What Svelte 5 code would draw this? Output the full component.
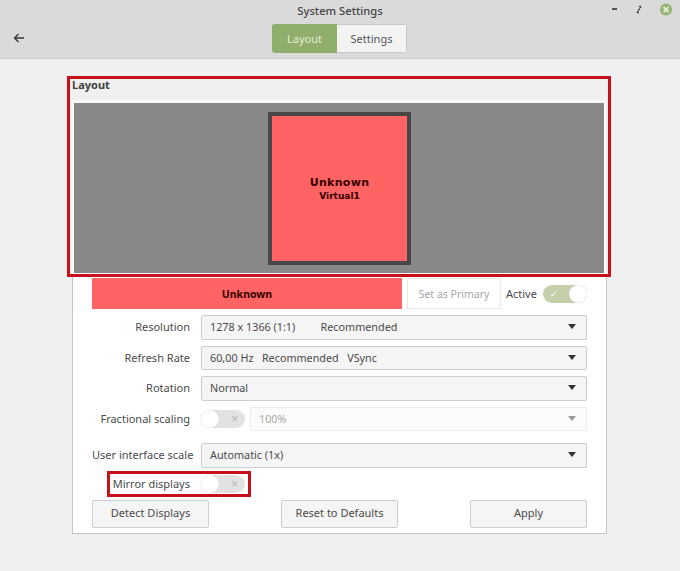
<script>
  const rows = [
    { label: 'Resolution', value: '1278 x 1366 (1:1)         Recommended' },
    { label: 'Refresh Rate', value: '60,00 Hz   Recommended   VSync' },
    { label: 'Rotation', value: 'Normal' }
  ];
</script>

<div class="window">
  <header class="header">
    <div class="titlebar">
      <span class="title">System Settings</span>
      <div class="controls">
        <svg width="70" height="20" viewBox="0 0 70 20" aria-hidden="true">
          <rect x="2" y="8" width="5" height="2" fill="#555" />
          <path d="M28 10.500 L30 8.500 M30.500 8 v-1.500 h-1.500 M27.500 11 v1.500 h1.500" stroke="#444" stroke-width="1.300" fill="none" />
          <circle cx="56" cy="9.500" r="6" fill="#95b56e" />
          <path d="M53.500 7 L58.500 12 M58.500 7 L53.500 12" stroke="#e4ecd8" stroke-width="1.800" />
        </svg>
      </div>
    </div>
    <div class="toolbar">
      <svg class="back" width="14" height="14" viewBox="0 0 14 14" aria-hidden="true">
        <path d="M12 7H2.500M6.500 3 2.500 7l4 4" stroke="#3a3a3a" stroke-width="1.400" fill="none" />
      </svg>
      <div class="tabs">
        <div class="tab active">Layout</div>
        <div class="tab">Settings</div>
      </div>
    </div>
  </header>

  <main class="content">
    <section class="layout">
      <h2>Layout</h2>
      <div class="frame">
        <div class="canvas">
          <div class="monitor">
            <strong>Unknown</strong>
            <small>Virtual1</small>
          </div>
        </div>
      </div>
      <div class="mark mark-layout"></div>
    </section>

    <section class="card">
      <div class="top-row">
        <div class="swatch">Unknown</div>
        <div class="primary">Set as Primary</div>
        <span class="active-label">Active</span>
        <div class="switch on"><span class="check">✓</span><span class="knob"></span></div>
      </div>

      {#each rows as row}
        <div class="row">
          <span class="label">{row.label}</span>
          <div class="combo"><span class="value">{row.value}</span><i class="caret"></i></div>
        </div>
      {/each}

      <div class="row fractional">
        <span class="label">Fractional scaling</span>
        <div class="switch"><span class="knob"></span><span class="cross">✕</span></div>
        <div class="combo disabled"><span class="value">100%</span><i class="caret"></i></div>
      </div>

      <div class="row scale">
        <span class="label">User interface scale</span>
        <div class="combo"><span class="value">Automatic (1x)</span><i class="caret"></i></div>
      </div>

      <div class="mirror">
        <span class="label">Mirror displays</span>
        <div class="switch"><span class="knob"></span><span class="cross">✕</span></div>
        <div class="mark mark-mirror"></div>
      </div>

      <div class="actions">
        <div class="btn">Detect Displays</div>
        <div class="btn">Reset to Defaults</div>
        <div class="btn">Apply</div>
      </div>
    </section>
  </main>
</div>

<style>
  :global(body) {
    margin: 0;
    background: #f0f0f0;
  }
  .window {
    width: 680px;
    height: 571px;
    overflow: hidden;
    background: #f0f0f0;
    font-family: "Noto Sans", "Open Sans", sans-serif;
    font-size: 11px;
    color: #4a4a4a;
  }
  .header {
    height: 59px;
    box-sizing: border-box;
    background: #dadada;
    border-bottom: 1px solid #cbcbcb;
    display: flex;
    flex-direction: column;
  }
  .titlebar {
    height: 24px;
    display: flex;
    align-items: center;
    justify-content: center;
    position: relative;
  }
  .title {
    font-size: 11.200px;
    font-weight: 500;
    color: #444;
    margin-top: -4px;
  }
  .controls {
    position: absolute;
    right: 0;
    top: 0;
    width: 70px;
    height: 20px;
  }
  .toolbar {
    height: 29px;
    display: flex;
    justify-content: center;
    position: relative;
  }
  .back {
    position: absolute;
    left: 12px;
    top: 7px;
  }
  .tabs {
    display: flex;
    width: 135px;
    height: 29px;
    border-radius: 3px;
    overflow: hidden;
    margin-left: -1px;
  }
  .tab {
    flex: 0 0 70px;
    box-sizing: border-box;
    display: flex;
    align-items: center;
    justify-content: center;
    background: #f3f3f3;
    border: 1px solid #c8c8c8;
    border-left: 0;
    color: #555;
  }
  .tab.active {
    flex: 0 0 65px;
    background: #8fad6b;
    border: 0;
    color: #e4ecd8;
  }
  .content {
    width: 535px;
    margin-left: 72px;
  }
  .layout {
    position: relative;
    height: 217px;
    box-sizing: border-box;
    padding-top: 19px;
    z-index: 1;
  }
  h2 {
    margin: 0;
    font-size: 11px;
    font-weight: 700;
    line-height: 14px;
    color: #3f3f3f;
  }
  .frame {
    margin-top: 8px;
    width: 534px;
    height: 175px;
    box-sizing: border-box;
    padding: 3px 2px 2px;
    background: #fafafa;
  }
  .canvas {
    height: 170px;
    background: #888;
    display: flex;
    justify-content: center;
    padding-top: 9px;
    box-sizing: border-box;
  }
  .monitor {
    width: 143px;
    height: 153px;
    box-sizing: border-box;
    border: 4px solid #474747;
    background: #ff6363;
    display: flex;
    flex-direction: column;
    align-items: center;
    justify-content: center;
    color: #300;
    font-family: "DejaVu Sans", sans-serif;
    margin-left: 1px;
    padding-top: 2px;
  }
  .monitor strong {
    font-size: 11px;
    line-height: 14px;
    letter-spacing: 0.300px;
  }
  .monitor small {
    font-size: 9px;
    font-weight: 700;
    line-height: 13px;
    margin-bottom: 1px;
  }
  .mark {
    position: absolute;
    border: 3px solid #c8101a;
    box-sizing: border-box;
    pointer-events: none;
  }
  .mark-layout {
    left: -5px;
    top: 17px;
    width: 544px;
    height: 201px;
  }
  .card {
    height: 258px;
    box-sizing: border-box;
    background: #fff;
    border: 1px solid #c4c4c4;
    border-top: 0;
    padding: 2px 19px 0;
    width: 535px;
  }
  .top-row {
    display: flex;
    align-items: center;
    height: 31px;
  }
  .swatch {
    width: 310px;
    height: 31px;
    background: #ff6363;
    color: #300;
    font-weight: 700;
    font-size: 10.500px;
    display: flex;
    align-items: center;
    justify-content: center;
  }
  .primary {
    width: 94px;
    height: 31px;
    margin-left: 5px;
    box-sizing: border-box;
    border: 1px solid #e9e9e9;
    display: flex;
    align-items: center;
    justify-content: center;
    color: #a8a8a8;
    font-size: 10.500px;
  }
  .active-label {
    margin-left: 5px;
    width: 37px;
    font-size: 11px;
  }
  .switch {
    width: 44px;
    height: 18px;
    flex: none;
    box-sizing: border-box;
    border-radius: 9px;
    background: #e2e2e2;
    position: relative;
    display: flex;
    align-items: center;
  }
  .switch.on {
    background: #c3d0a9;
  }
  .knob {
    width: 18px;
    height: 18px;
    border-radius: 50%;
    background: #fff;
    box-shadow: 0 0 1px #bbb;
    flex: none;
  }
  .switch.on .knob {
    margin-left: auto;
  }
  .check {
    color: #fff;
    font-size: 9px;
    margin-left: 7px;
  }
  .cross {
    color: #b4b4b4;
    font-size: 9px;
    margin-left: 12px;
  }
  .row {
    display: grid;
    grid-template-columns: 98px 386px;
    column-gap: 11px;
    align-items: center;
    height: 24.500px;
    margin-top: 6px;
  }
  .label {
    text-align: right;
    white-space: nowrap;
    font-size: 11px;
    padding-bottom: 1px;
  }
  .combo {
    height: 24.500px;
    box-sizing: border-box;
    border: 1px solid #cdcdcd;
    border-radius: 2px;
    background: #f5f5f5;
    display: flex;
    align-items: center;
    justify-content: space-between;
    padding: 0 9px 1px 8px;
    font-size: 10.800px;
  }
  .value {
    white-space: pre;
  }
  .caret {
    width: 0;
    height: 0;
    border: 4.500px solid transparent;
    border-top: 5px solid #333;
    border-bottom: 0;
    margin-right: 1px;
  }
  .row.fractional {
    grid-template-columns: 98px 55px 342px;
    column-gap: 0;
  }
  .row.fractional .switch {
    margin-left: 11px;
  }
  .row.fractional .combo {
    margin-left: 5px;
    background: #fbfbfb;
    border-color: #ececec;
    color: #aaa;
  }
  .row.fractional .caret {
    border-top-color: #999;
  }
  .row.scale {
    margin-top: 12px;
  }
  .mirror {
    position: relative;
    display: flex;
    align-items: center;
    height: 18px;
    margin-top: 7px;
  }
  .mirror .label {
    width: 98px;
    margin-right: 11px;
  }
  .mark-mirror {
    left: 15px;
    top: -4px;
    width: 144px;
    height: 26px;
  }
  .actions {
    display: flex;
    justify-content: space-between;
    margin-top: 7px;
  }
  .btn {
    width: 117px;
    height: 28px;
    box-sizing: border-box;
    border: 1px solid #cdcdcd;
    border-radius: 2px;
    background: #f5f5f5;
    padding-bottom: 2px;
    display: flex;
    align-items: center;
    justify-content: center;
    font-size: 11px;
  }
</style>
